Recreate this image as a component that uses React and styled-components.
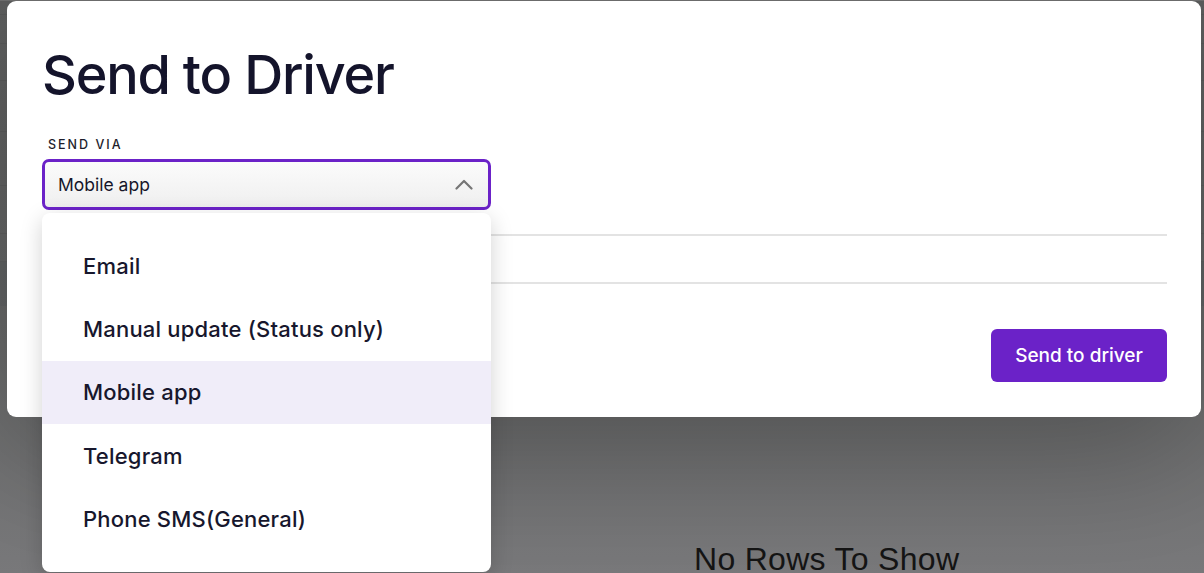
import styled, { createGlobalStyle } from "styled-components";

const GlobalStyle = createGlobalStyle`
  html, body {
    margin: 0;
    padding: 0;
  }
  body {
    font-family: Inter, "Noto Sans", sans-serif;
    background: #7a7a7c;
  }
`;

const options = [
  "Email",
  "Manual update (Status only)",
  "Mobile app",
  "Telegram",
  "Phone SMS(General)",
];
const selected = "Mobile app";

// rows of the grid behind the overlay (heights in px)
const bgRows = [14, 29, 37, 51, 54, 48, 28];

const Page = () => {
  return (
    <Screen>
      <GlobalStyle />
      <Backdrop>
        {bgRows.map((h, i) => (
          <BgRow key={i} style={{ height: h }} />
        ))}
        <BgBand />
        <EmptyArea>
          <EmptyText>No Rows To Show</EmptyText>
        </EmptyArea>
      </Backdrop>

      <Modal>
        <Title>Send to Driver</Title>
        <Field>
          <Label>SEND VIA</Label>
          <SelectBox>
            <span>{selected}</span>
            <svg width="18" height="11" viewBox="0 0 18 11" fill="none">
              <path
                d="M1.5 9.5L9 2L16.5 9.5"
                stroke="#767676"
                strokeWidth="2.2"
                strokeLinecap="round"
                strokeLinejoin="round"
              />
            </svg>
          </SelectBox>
          <Menu>
            {options.map((v) => (
              <MenuItem key={v} $active={v === selected}>
                {v}
              </MenuItem>
            ))}
          </Menu>
        </Field>
        <DividerRow />
        <Footer>
          <PrimaryButton>Send to driver</PrimaryButton>
        </Footer>
      </Modal>
    </Screen>
  );
};
export default Page;

const Screen = styled.div`
  position: relative;
  width: 1204px;
  height: 573px;
  overflow: hidden;
  background: linear-gradient(180deg, #5d5e5e 0%, #6a6b6b 60%, #79797b 100%);
  border-top: 1px solid #6b6b6b;
  box-sizing: border-box;
`;

const Backdrop = styled.div`
  height: 100%;
  display: flex;
  flex-direction: column;
`;

const BgRow = styled.div`
  flex-shrink: 0;
  box-sizing: border-box;
  border-bottom: 1px solid rgba(0, 0, 0, 0.06);
`;

const BgBand = styled.div`
  flex-shrink: 0;
  height: 44px;
  background: rgba(40, 50, 70, 0.07);
`;

const EmptyArea = styled.div`
  flex: 1;
  display: flex;
  align-items: flex-end;
  padding-left: 694px;
  padding-bottom: 0;
`;

const EmptyText = styled.div`
  margin-bottom: -6px;
  font-family: "Liberation Sans", Arial, sans-serif;
  font-size: 32px;
  line-height: 40px;
  letter-spacing: 0.3px;
  color: #151515;
  white-space: nowrap;
`;

const Modal = styled.div`
  position: absolute;
  left: 7px;
  top: 0px;
  width: 1194px;
  box-sizing: border-box;
  padding: 41px 34px 35px 35px;
  background: #fff;
  border-radius: 9px;
  box-shadow: 0 30px 140px rgba(0, 0, 0, 0.28);
  display: flex;
  flex-direction: column;
`;

const Title = styled.h1`
  margin: 0;
  font-size: 54px;
  line-height: 66px;
  font-weight: 500;
  letter-spacing: -1.2px;
  color: #14142b;
`;

const Field = styled.div`
  position: relative;
  margin-top: 29px;
  width: 449px;
  display: flex;
  flex-direction: column;
  gap: 6px;
`;

const Label = styled.div`
  padding-left: 6px;
  font-size: 12.5px;
  line-height: 16px;
  font-weight: 500;
  letter-spacing: 2px;
  color: #1d1d2c;
`;

const SelectBox = styled.div`
  height: 51px;
  box-sizing: border-box;
  border: 3px solid #6b22c8;
  border-radius: 7px;
  background: linear-gradient(180deg, #fbfbfb 0%, #efefef 100%);
  display: flex;
  align-items: center;
  justify-content: space-between;
  padding: 0 15px 0 13px;
  font-size: 17.5px;
  color: #16162a;
`;

const Menu = styled.div`
  position: absolute;
  z-index: 2;
  left: 0;
  top: 76px;
  width: 449px;
  height: 359px;
  box-sizing: border-box;
  padding: 21px 0;
  background: #fff;
  border-radius: 8px;
  box-shadow: 0 6px 22px rgba(0, 0, 0, 0.18);
  display: flex;
  flex-direction: column;
`;

const MenuItem = styled.div`
  height: 63.4px;
  display: flex;
  align-items: center;
  padding-left: 41px;
  font-size: 22px;
  font-weight: 500;
  letter-spacing: 0.2px;
  color: #17172d;
  background: ${(p) => (p.$active ? "#f0edf9" : "transparent")};
`;

const DividerRow = styled.div`
  margin-top: 24px;
  height: 46px;
  border-top: 2px solid #e3e3e3;
  border-bottom: 2px solid #e3e3e3;
`;

const Footer = styled.div`
  margin-top: 45px;
  display: flex;
  justify-content: flex-end;
`;

const PrimaryButton = styled.button`
  width: 176px;
  height: 53px;
  border: none;
  border-radius: 6px;
  background: #6b22c8;
  color: #fff;
  font-family: Inter, sans-serif;
  font-size: 19px;
  font-weight: 500;
  cursor: pointer;
`;
